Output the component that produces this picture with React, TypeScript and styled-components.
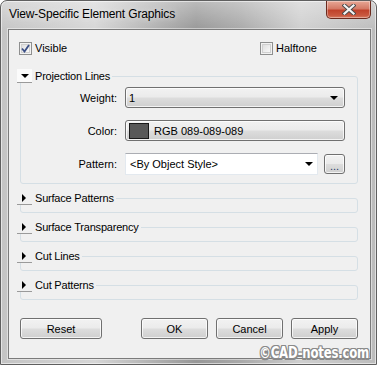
import React from "react";
import styled, { createGlobalStyle } from "styled-components";

const GlobalStyle = createGlobalStyle`
  html, body {
    margin: 0;
    padding: 0;
    background: #ffffff;
  }
  body {
    font-family: "Liberation Sans", Arial, sans-serif;
    font-size: 11px;
    color: #000000;
  }
`;

const Window = styled.div`
  position: relative;
  width: 377px;
  height: 365px;
  box-sizing: border-box;
  border: 1px solid #5f5f5f;
  border-radius: 7px 7px 0 0;
  padding: 0 5px 5px 7px;
  display: flex;
  flex-direction: column;
  overflow: hidden;
  background:
    linear-gradient(180deg, rgba(255, 255, 255, 0.35) 0px, rgba(255, 255, 255, 0) 30px),
    linear-gradient(
      90deg,
      #c4c4c4 0%,
      #d6d6d6 25%,
      #b3b3b3 40%,
      #979797 52%,
      #a9a9a9 64%,
      #cfcfcf 80%,
      #bcbcbc 100%
    );
  box-shadow: inset 0 0 0 1px rgba(255, 255, 255, 0.55);
`;

const TitleBar = styled.div`
  height: 28px;
  display: flex;
  align-items: flex-start;
  justify-content: space-between;
`;

const Title = styled.span`
  font-family: "Liberation Sans", Arial, sans-serif;
  font-size: 12px;
  letter-spacing: -0.15px;
  line-height: 27px;
  color: #000000;
  padding-left: 1px;
  text-shadow: 0 0 6px rgba(255, 255, 255, 0.7);
`;

const CloseButton = styled.div`
  width: 45px;
  height: 18px;
  box-sizing: border-box;
  border: 1px solid #6b2a1e;
  border-top: none;
  border-radius: 0 0 5px 5px;
  display: flex;
  align-items: center;
  justify-content: center;
  background: linear-gradient(180deg, #e8a896 0%, #d47a66 45%, #c0422b 55%, #c9583f 85%, #d87d63 100%);
  box-shadow: inset 0 0 0 1px rgba(255, 255, 255, 0.35);
`;

const Client = styled.div`
  flex: 1;
  box-sizing: border-box;
  border: 1px solid #7b7b7b;
  background: #f0f0f0;
  padding: 11px 12px 0 8px;
  display: flex;
  flex-direction: column;
  box-shadow: 0 0 0 1px rgba(255, 255, 255, 0.45);
`;

const CheckRow = styled.div`
  display: grid;
  grid-template-columns: 241px auto;
  padding-left: 2px;
  margin-bottom: 14px;
`;

const CheckItem = styled.label`
  display: flex;
  align-items: center;
  gap: 3px;
  height: 14px;
`;

const Box = styled.span`
  width: 13px;
  height: 13px;
  box-sizing: border-box;
  border: 1px solid #8e8f8f;
  background: linear-gradient(135deg, #d8d8d8 0%, #f4f4f4 70%, #ffffff 100%);
  box-shadow: inset 0 0 0 1px #f2f2f2, inset 0 0 0 2px #d0d0d0;
  display: flex;
  align-items: center;
  justify-content: center;
`;

const Sections = styled.div`
  display: flex;
  flex-direction: column;
  gap: 7px;
`;

const Section = styled.div`
  display: flex;
  flex-direction: column;
`;

const SectionHeader = styled.div`
  position: relative;
  z-index: 1;
  height: 14px;
  display: flex;
  align-items: center;
  align-self: flex-start;
`;

const Expander = styled.span<{ $open: boolean }>`
  width: 15px;
  height: 14px;
  box-sizing: border-box;
  border-bottom: 1px solid #9a9a9a;
  background: ${(p) => (p.$open ? "#fbfbfb" : "#f0f0f0")};
  display: flex;
  align-items: center;
  justify-content: center;
`;

const Triangle = styled.span<{ $open: boolean }>`
  width: 0;
  height: 0;
  ${(p) =>
    p.$open
      ? `border-left: 4px solid transparent;
         border-right: 4px solid transparent;
         border-top: 4px solid #000;`
      : `border-top: 4px solid transparent;
         border-bottom: 4px solid transparent;
         border-left: 4px solid #000;
         margin-left: -1px;`}
`;

const HeaderText = styled.span`
  background: #f0f0f0;
  padding: 0 2px 0 3px;
  line-height: 14px;
  letter-spacing: -0.2px;
`;

const GroupBox = styled.div<{ $open: boolean }>`
  margin-top: -7px;
  margin-left: 3px;
  box-sizing: border-box;
  border: 1px solid #d5dfe5;
  border-radius: 3px;
  height: ${(p) => (p.$open ? "108px" : "15px")};
  padding: 10px 12px 0 0;
  display: grid;
  grid-template-columns: 96px 1fr;
  grid-auto-rows: min-content;
  column-gap: 8px;
  row-gap: 12px;
  align-items: center;
`;

const FieldLabel = styled.span`
  text-align: right;
`;

const winButtonBg = `
  background: linear-gradient(180deg, #f2f2f2 0%, #ebebeb 48%, #dddddd 52%, #cfcfcf 100%);
  border: 1px solid #707070;
  border-radius: 3px;
  box-shadow: inset 0 0 0 1px rgba(255, 255, 255, 0.75);
`;

const DropButton = styled.div`
  ${winButtonBg}
  height: 21px;
  box-sizing: border-box;
  display: flex;
  align-items: center;
  padding: 0 6px 0 3px;
  gap: 5px;
`;

const ComboText = styled.span`
  flex: 1;
`;

const Arrow = styled.span`
  width: 0;
  height: 0;
  border-left: 4px solid transparent;
  border-right: 4px solid transparent;
  border-top: 4px solid #000;
`;

const Swatch = styled.span<{ $color: string }>`
  width: 20px;
  height: 16px;
  box-sizing: border-box;
  border: 1px solid #1a1a1a;
  background: ${(p) => p.$color};
`;

const PatternRow = styled.div`
  display: flex;
  align-items: center;
  gap: 6px;
`;

const EditCombo = styled.div`
  flex: 1;
  height: 22px;
  box-sizing: border-box;
  background: #ffffff;
  border: 1px solid #e3e9ef;
  border-top-color: #abadb3;
  display: flex;
  align-items: center;
  padding: 0 4px 0 4px;
`;

const SmallButton = styled.div`
  ${winButtonBg}
  width: 21px;
  height: 20px;
  box-sizing: border-box;
  display: flex;
  align-items: flex-end;
  justify-content: center;
  padding-bottom: 3px;
  font-size: 11px;
  line-height: 8px;
  color: #2b3d6b;
`;

const ButtonRow = styled.div`
  display: flex;
  align-items: center;
  gap: 8px;
  margin-top: 18px;
  padding-left: 3px;
`;

const DialogButton = styled.button<{ $w: number; $push?: boolean }>`
  ${winButtonBg}
  width: ${(p) => p.$w}px;
  height: 21px;
  padding: 0;
  font-family: "Liberation Sans", Arial, sans-serif;
  font-size: 11px;
  color: #000;
  margin-left: ${(p) => (p.$push ? "auto" : "0")};
`;

const Watermark = styled.div`
  position: absolute;
  right: 7px;
  bottom: 2px;
  font-family: "DejaVu Sans Condensed", "Liberation Sans Narrow", sans-serif;
  font-stretch: condensed;
  font-weight: 700;
  font-size: 13px;
  line-height: 14px;
  letter-spacing: -0.2px;
  color: #ffffff;
  transform: scale(1, 1.25);
  transform-origin: right bottom;
  text-shadow:
    1px 0 0 #8a8a8a, -1px 0 0 #8a8a8a, 0 1px 0 #8a8a8a, 0 -1px 0 #8a8a8a,
    1px 1px 0 #8a8a8a, -1px -1px 0 #8a8a8a, 1px -1px 0 #8a8a8a, -1px 1px 0 #8a8a8a;
`;

const CheckBox = ({ checked, label }: { checked: boolean; label: string }) => (
  <CheckItem>
    <Box>
      {checked && (
        <svg width="9" height="9" viewBox="0 0 9 9">
          <path d="M1 4.5 L3.5 7.5 L8 1" fill="none" stroke="#3b4f86" strokeWidth="1.8" />
        </svg>
      )}
    </Box>
    <span>{label}</span>
  </CheckItem>
);

const Collapsible = ({
  title,
  open,
  children,
}: {
  title: string;
  open: boolean;
  children?: React.ReactNode;
}) => (
  <Section>
    <SectionHeader>
      <Expander $open={open}>
        <Triangle $open={open} />
      </Expander>
      <HeaderText>{title}</HeaderText>
    </SectionHeader>
    <GroupBox $open={open}>{open && children}</GroupBox>
  </Section>
);

const App = () => {
  return (
    <>
      <GlobalStyle />
      <Window>
        <TitleBar>
          <Title>View-Specific Element Graphics</Title>
          <CloseButton>
            <svg width="14" height="11" viewBox="0 0 14 11">
              <path d="M2.5 1.5 L11.5 9.5 M11.5 1.5 L2.5 9.5" stroke="#4a4a4a" strokeWidth="4" strokeLinecap="square" />
              <path d="M2.5 1.5 L11.5 9.5 M11.5 1.5 L2.5 9.5" stroke="#f4f4f4" strokeWidth="2.2" strokeLinecap="square" />
            </svg>
          </CloseButton>
        </TitleBar>
        <Client>
          <CheckRow>
            <CheckBox checked label="Visible" />
            <CheckBox checked={false} label="Halftone" />
          </CheckRow>
          <Sections>
            <Collapsible title="Projection Lines" open>
              <FieldLabel>Weight:</FieldLabel>
              <DropButton>
                <ComboText>1</ComboText>
                <Arrow />
              </DropButton>
              <FieldLabel>Color:</FieldLabel>
              <DropButton>
                <Swatch $color="#595959" />
                <ComboText>RGB 089-089-089</ComboText>
              </DropButton>
              <FieldLabel>Pattern:</FieldLabel>
              <PatternRow>
                <EditCombo>
                  <ComboText>&lt;By Object Style&gt;</ComboText>
                  <Arrow />
                </EditCombo>
                <SmallButton>...</SmallButton>
              </PatternRow>
            </Collapsible>
            <Collapsible title="Surface Patterns" open={false} />
            <Collapsible title="Surface Transparency" open={false} />
            <Collapsible title="Cut Lines" open={false} />
            <Collapsible title="Cut Patterns" open={false} />
          </Sections>
          <ButtonRow>
            <DialogButton $w={82}>Reset</DialogButton>
            <DialogButton $w={67} $push>OK</DialogButton>
            <DialogButton $w={67}>Cancel</DialogButton>
            <DialogButton $w={67}>Apply</DialogButton>
          </ButtonRow>
        </Client>
        <Watermark>©CAD-notes.com</Watermark>
      </Window>
    </>
  );
};

export default App;
